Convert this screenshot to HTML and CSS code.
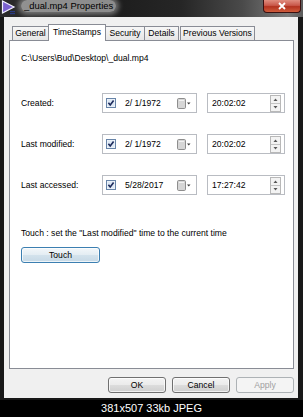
FILE: index.html
```html
<!DOCTYPE html>
<html>
<head>
<meta charset="utf-8">
<link rel="stylesheet" href="styles.css">
</head>
<body>
<div class="window">
  <div class="titlebar">
    <svg class="app-icon" width="15" height="15" viewBox="0 0 15 15">
      <polygon points="1.5,1 13,7 1.5,13" fill="#7b62cf" stroke="#f2f2ff" stroke-width="1.2"/>
      <rect x="9" y="11" width="5" height="1.2" fill="#2a3a80"/>
      <rect x="9" y="13" width="5" height="1.2" fill="#2a3a80"/>
    </svg>
    <span class="title">_dual.mp4 Properties</span>
    <div class="close">
      <svg width="10" height="8" viewBox="0 0 10 8"><path d="M2 1 L8 7 M8 1 L2 7" stroke="#fff" stroke-width="1.8"/></svg>
    </div>
  </div>
  <div class="frame">
    <div class="dialog">
      <div class="tabs">
        <div class="tab t-general">General</div>
        <div class="tab t-times active">TimeStamps</div>
        <div class="tab t-security">Security</div>
        <div class="tab t-details">Details</div>
        <div class="tab t-prev">Previous Versions</div>
      </div>
      <div class="panel">
        <div class="path">C:\Users\Bud\Desktop\_dual.mp4</div>
        <div class="rows">
          <div class="row">
            <span class="label">Created:</span>
            <div class="datebox">
              <svg class="check" width="10" height="10" viewBox="0 0 10 10"><rect x="0.5" y="0.5" width="9" height="9" fill="#f4f8fc" stroke="#6784a8"/><rect x="1.5" y="1.5" width="7" height="7" fill="#dde8f4"/><path d="M2.4 4.8 L4.2 7 L7.6 2.4" fill="none" stroke="#1d2b5c" stroke-width="1.6"/></svg>
              <span class="dtext">2/ 1/1972</span>
              <svg class="cal" width="15" height="11" viewBox="0 0 15 11"><rect x="1.5" y="0.5" width="8" height="10" rx="1.2" fill="#d6d6d6" stroke="#8e8e8e"/><path d="M3 2.5 H8" stroke="#f2f2f2"/><path d="M11 4.5 H14.5 L12.75 6.5 Z" fill="#3a3a3a"/></svg>
            </div>
            <div class="timebox">
              <span class="ttext">20:02:02</span>
              <svg class="spin" width="11" height="17" viewBox="0 0 11 17"><rect x="0.5" y="0.5" width="10" height="16" fill="#f3f3f3" stroke="#b8b8b8"/><line x1="1" y1="8.5" x2="10" y2="8.5" stroke="#c4c4c4"/><path d="M3.5 6 L5.5 3.5 L7.5 6Z" fill="#555"/><path d="M3.5 11 L5.5 13.5 L7.5 11Z" fill="#555"/></svg>
            </div>
          </div>
          <div class="row">
            <span class="label">Last modified:</span>
            <div class="datebox">
              <svg class="check" width="10" height="10" viewBox="0 0 10 10"><rect x="0.5" y="0.5" width="9" height="9" fill="#f4f8fc" stroke="#6784a8"/><rect x="1.5" y="1.5" width="7" height="7" fill="#dde8f4"/><path d="M2.4 4.8 L4.2 7 L7.6 2.4" fill="none" stroke="#1d2b5c" stroke-width="1.6"/></svg>
              <span class="dtext">2/ 1/1972</span>
              <svg class="cal" width="15" height="11" viewBox="0 0 15 11"><rect x="1.5" y="0.5" width="8" height="10" rx="1.2" fill="#d6d6d6" stroke="#8e8e8e"/><path d="M3 2.5 H8" stroke="#f2f2f2"/><path d="M11 4.5 H14.5 L12.75 6.5 Z" fill="#3a3a3a"/></svg>
            </div>
            <div class="timebox">
              <span class="ttext">20:02:02</span>
              <svg class="spin" width="11" height="17" viewBox="0 0 11 17"><rect x="0.5" y="0.5" width="10" height="16" fill="#f3f3f3" stroke="#b8b8b8"/><line x1="1" y1="8.5" x2="10" y2="8.5" stroke="#c4c4c4"/><path d="M3.5 6 L5.5 3.5 L7.5 6Z" fill="#555"/><path d="M3.5 11 L5.5 13.5 L7.5 11Z" fill="#555"/></svg>
            </div>
          </div>
          <div class="row">
            <span class="label">Last accessed:</span>
            <div class="datebox">
              <svg class="check" width="10" height="10" viewBox="0 0 10 10"><rect x="0.5" y="0.5" width="9" height="9" fill="#f4f8fc" stroke="#6784a8"/><rect x="1.5" y="1.5" width="7" height="7" fill="#dde8f4"/><path d="M2.4 4.8 L4.2 7 L7.6 2.4" fill="none" stroke="#1d2b5c" stroke-width="1.6"/></svg>
              <span class="dtext">5/28/2017</span>
              <svg class="cal" width="15" height="11" viewBox="0 0 15 11"><rect x="1.5" y="0.5" width="8" height="10" rx="1.2" fill="#d6d6d6" stroke="#8e8e8e"/><path d="M3 2.5 H8" stroke="#f2f2f2"/><path d="M11 4.5 H14.5 L12.75 6.5 Z" fill="#3a3a3a"/></svg>
            </div>
            <div class="timebox">
              <span class="ttext">17:27:42</span>
              <svg class="spin" width="11" height="17" viewBox="0 0 11 17"><rect x="0.5" y="0.5" width="10" height="16" fill="#f3f3f3" stroke="#b8b8b8"/><line x1="1" y1="8.5" x2="10" y2="8.5" stroke="#c4c4c4"/><path d="M3.5 6 L5.5 3.5 L7.5 6Z" fill="#555"/><path d="M3.5 11 L5.5 13.5 L7.5 11Z" fill="#555"/></svg>
            </div>
          </div>
        </div>
        <div class="note">Touch : set the "Last modified" time to the current time</div>
        <button class="btn touch">Touch</button>
      </div>
      <div class="actions">
        <button class="btn">OK</button>
        <button class="btn">Cancel</button>
        <button class="btn disabled">Apply</button>
      </div>
    </div>
  </div>
</div>
<div class="caption">381x507 33kb JPEG</div>
</body>
</html>
```
FILE: styles.css
```css
html, body {
  margin: 0;
  padding: 0;
  background: #000;
}
body {
  width: 303px;
  height: 417px;
  overflow: hidden;
  font-family: "Liberation Sans", Arial, sans-serif;
  font-size: 8.6px;
  color: #000;
}
.window {
  height: 400px;
  display: flex;
  flex-direction: column;
  background: #181818;
}
.titlebar {
  height: 17px;
  flex: none;
  display: flex;
  align-items: flex-start;
  position: relative;
  background: linear-gradient(to right, #2b2b2b 0%, #1c1c1c 35%, #262626 60%, #4a4a4a 80%, #7c7c7c 95%, #5a5a5a 100%);
}
.app-icon {
  margin: 0 0 0 1px;
  flex: none;
}
.title {
  margin-left: 5px;
  padding: 0 3px;
  font-size: 9.4px;
  line-height: 12px;
  color: #000;
  background: rgba(215, 215, 215, 0.6);
  border-radius: 6px;
  box-shadow: 0 0 5px 3px rgba(215, 215, 215, 0.45);
}
.close {
  position: absolute;
  left: 263px;
  top: 0;
  width: 36px;
  height: 12px;
  border: 1px solid #3a1010;
  border-top: none;
  border-radius: 0 0 4px 4px;
  background: linear-gradient(#e08d7f 0%, #c9584a 45%, #b3321f 55%, #cf5c3c 100%);
  display: flex;
  align-items: center;
  justify-content: center;
}
.frame {
  flex: 1;
  display: flex;
  padding: 0 5px 3px 4px;
}
.dialog {
  flex: 1;
  display: flex;
  flex-direction: column;
  background: #f0f0f0;
  padding: 7px 4px 5px 5px;
}
.tabs {
  height: 16px;
  flex: none;
  display: flex;
  align-items: flex-end;
  padding-left: 3px;
  position: relative;
  z-index: 1;
}
.tab {
  height: 13px;
  line-height: 13px;
  text-align: center;
  border: 1px solid #898c95;
  border-bottom: none;
  background: linear-gradient(#f7f7f7, #e6e6e6);
  box-sizing: content-box;
  margin-right: -1px;
  white-space: nowrap;
}
.tab.active {
  height: 16px;
  line-height: 14px;
  background: #fff;
  margin-bottom: -1px;
  position: relative;
  z-index: 2;
}
.t-general { width: 35px; }
.t-times { width: 56px; }
.t-security { width: 38px; }
.t-details { width: 33px; margin-right: 1px; }
.t-prev { width: 73px; }
.panel {
  height: 315px;
  flex: none;
  border: 1px solid #898c95;
  background: #fff;
  padding: 12px 0 0 11px;
}
.path {
  line-height: 11px;
}
.rows {
  margin-top: 29px;
  display: flex;
  flex-direction: column;
  gap: 21px;
}
.row {
  height: 20px;
  display: flex;
  align-items: center;
}
.label {
  width: 81px;
  flex: none;
}
.datebox, .timebox {
  height: 20px;
  box-sizing: border-box;
  border: 1px solid #b9bcc2;
  background: #fff;
  display: flex;
  align-items: center;
}
.datebox {
  width: 95px;
  padding-left: 3px;
}
.check {
  flex: none;
  margin-right: 9px;
}
.dtext {
  flex: 1;
}
.cal {
  flex: none;
  margin-right: 5px;
}
.timebox {
  width: 78px;
  margin-left: 10px;
  padding-left: 4px;
}
.ttext {
  flex: 1;
}
.spin {
  flex: none;
  margin-right: 3px;
}
.note {
  margin-top: 33px;
  line-height: 11px;
}
.btn {
  display: block;
  margin: 0;
  padding: 0;
  height: 16px;
  width: 58px;
  font-family: inherit;
  font-size: 8.6px;
  color: #000;
  border: 1px solid #707070;
  border-radius: 3px;
  background: linear-gradient(#f4f4f4 0%, #ebebeb 48%, #dcdcdc 52%, #cfcfcf 100%);
  box-shadow: inset 0 0 0 1px rgba(255, 255, 255, 0.7);
}
.btn.touch {
  margin-top: 8px;
  width: 79px;
  border-color: #3c7fb1;
  background: linear-gradient(#f3f7fa 0%, #e4edf3 48%, #d3e2ec 52%, #c6d9e6 100%);
}
.btn.disabled {
  color: #a0a0a0;
  border-color: #adb2b5;
  background: #f4f4f4;
  box-shadow: none;
}
.actions {
  margin-top: 8px;
  display: flex;
  justify-content: flex-end;
  gap: 6px;
}
.caption {
  height: 17px;
  line-height: 17px;
  text-align: center;
  color: #fff;
  font-size: 11px;
}
```
